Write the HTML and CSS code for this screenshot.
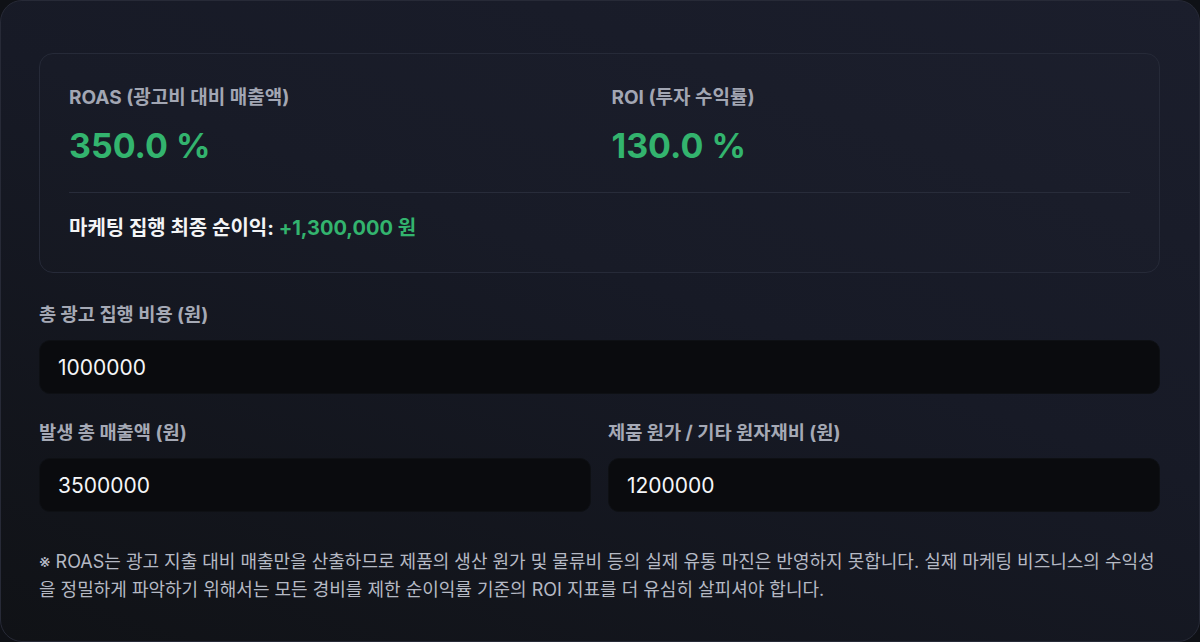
FILE: index.html
```html
<!DOCTYPE html>
<html lang="ko">
<head>
<meta charset="utf-8">
<title>ROAS / ROI 계산기</title>
<link rel="stylesheet" href="styles.css">
</head>
<body>
<main class="card">
  <section class="summary">
    <div class="metrics">
      <div class="metric">
        <div class="metric-label">ROAS (광고비 대비 매출액)</div>
        <div class="metric-value">350.0 %</div>
      </div>
      <div class="metric">
        <div class="metric-label">ROI (투자 수익률)</div>
        <div class="metric-value">130.0 %</div>
      </div>
    </div>
    <div class="divider"></div>
    <p class="profit">마케팅 집행 최종 순이익: <span class="positive">+1,300,000 원</span></p>
  </section>

  <div class="field field-full">
    <label class="field-label" for="adCost">총 광고 집행 비용 (원)</label>
    <input class="field-input" id="adCost" type="text" value="1000000">
  </div>

  <div class="field-row">
    <div class="field">
      <label class="field-label" for="revenue">발생 총 매출액 (원)</label>
      <input class="field-input" id="revenue" type="text" value="3500000">
    </div>
    <div class="field">
      <label class="field-label" for="cogs">제품 원가 / 기타 원자재비 (원)</label>
      <input class="field-input" id="cogs" type="text" value="1200000">
    </div>
  </div>

  <p class="note">※ ROAS는 광고 지출 대비 매출만을 산출하므로 제품의 생산 원가 및 물류비 등의 실제 유통 마진은 반영하지 못합니다. 실제 마케팅 비즈니스의 수익성을 정밀하게 파악하기 위해서는 모든 경비를 제한 순이익률 기준의 ROI 지표를 더 유심히 살피셔야 합니다.</p>
</main>
</body>
</html>
```

FILE: styles.css
```css
* {
  box-sizing: border-box;
}

html, body {
  margin: 0;
  padding: 0;
  background: #0f1116;
}

body {
  font-family: Inter, "Noto Sans CJK KR", sans-serif;
  color: #f1f2f5;
}

.card {
  height: 642px;
  padding: 52px 39px 0 38px;
  border: 1px solid #272a37;
  border-radius: 22px;
  background: linear-gradient(200deg, #1b1e2c 0%, #171a26 45%, #101216 100%);
}

/* results panel */
.summary {
  border: 1px solid #262a38;
  border-radius: 14px;
  padding: 32px 29px 31px 29px;
  background: rgba(255, 255, 255, 0.008);
}

.metrics {
  display: grid;
  grid-template-columns: 1fr 1fr;
  column-gap: 24px;
}

.metric-label {
  font-size: 19px;
  line-height: 24px;
  font-weight: 700;
  color: #a2a6b3;
}

.metric-value {
  margin-top: 14px;
  font-size: 34px;
  line-height: 44px;
  font-weight: 700;
  color: #33b46e;
}

.divider {
  height: 1px;
  margin-top: 24px;
  background: #282c3a;
}

.profit {
  margin: 22px 0 0 0;
  font-size: 20px;
  line-height: 26px;
  font-weight: 700;
  color: #f3f4f6;
}

.positive {
  color: #33b46e;
}

/* inputs */
.field {
  display: flex;
  flex-direction: column;
  min-width: 0;
}

.field-full {
  margin-top: 31px;
}

.field-row {
  display: grid;
  grid-template-columns: 1fr 1fr;
  column-gap: 17px;
  margin-top: 28px;
}

.field-label {
  font-size: 18.7px;
  line-height: 22px;
  font-weight: 700;
  color: #a5a9b5;
}

.field-input {
  margin-top: 14px;
  height: 54px;
  width: 100%;
  padding: 0 18px;
  border: 1px solid #0e1014;
  border-radius: 11px;
  background: #0a0b0e;
  color: #f5f6f8;
  font-family: Inter, "Noto Sans CJK KR", sans-serif;
  font-size: 21px;
  outline: none;
}

.note {
  margin: 36px 0 0 0;
  font-size: 18px;
  line-height: 28px;
  color: #b5b9c4;
}
```
